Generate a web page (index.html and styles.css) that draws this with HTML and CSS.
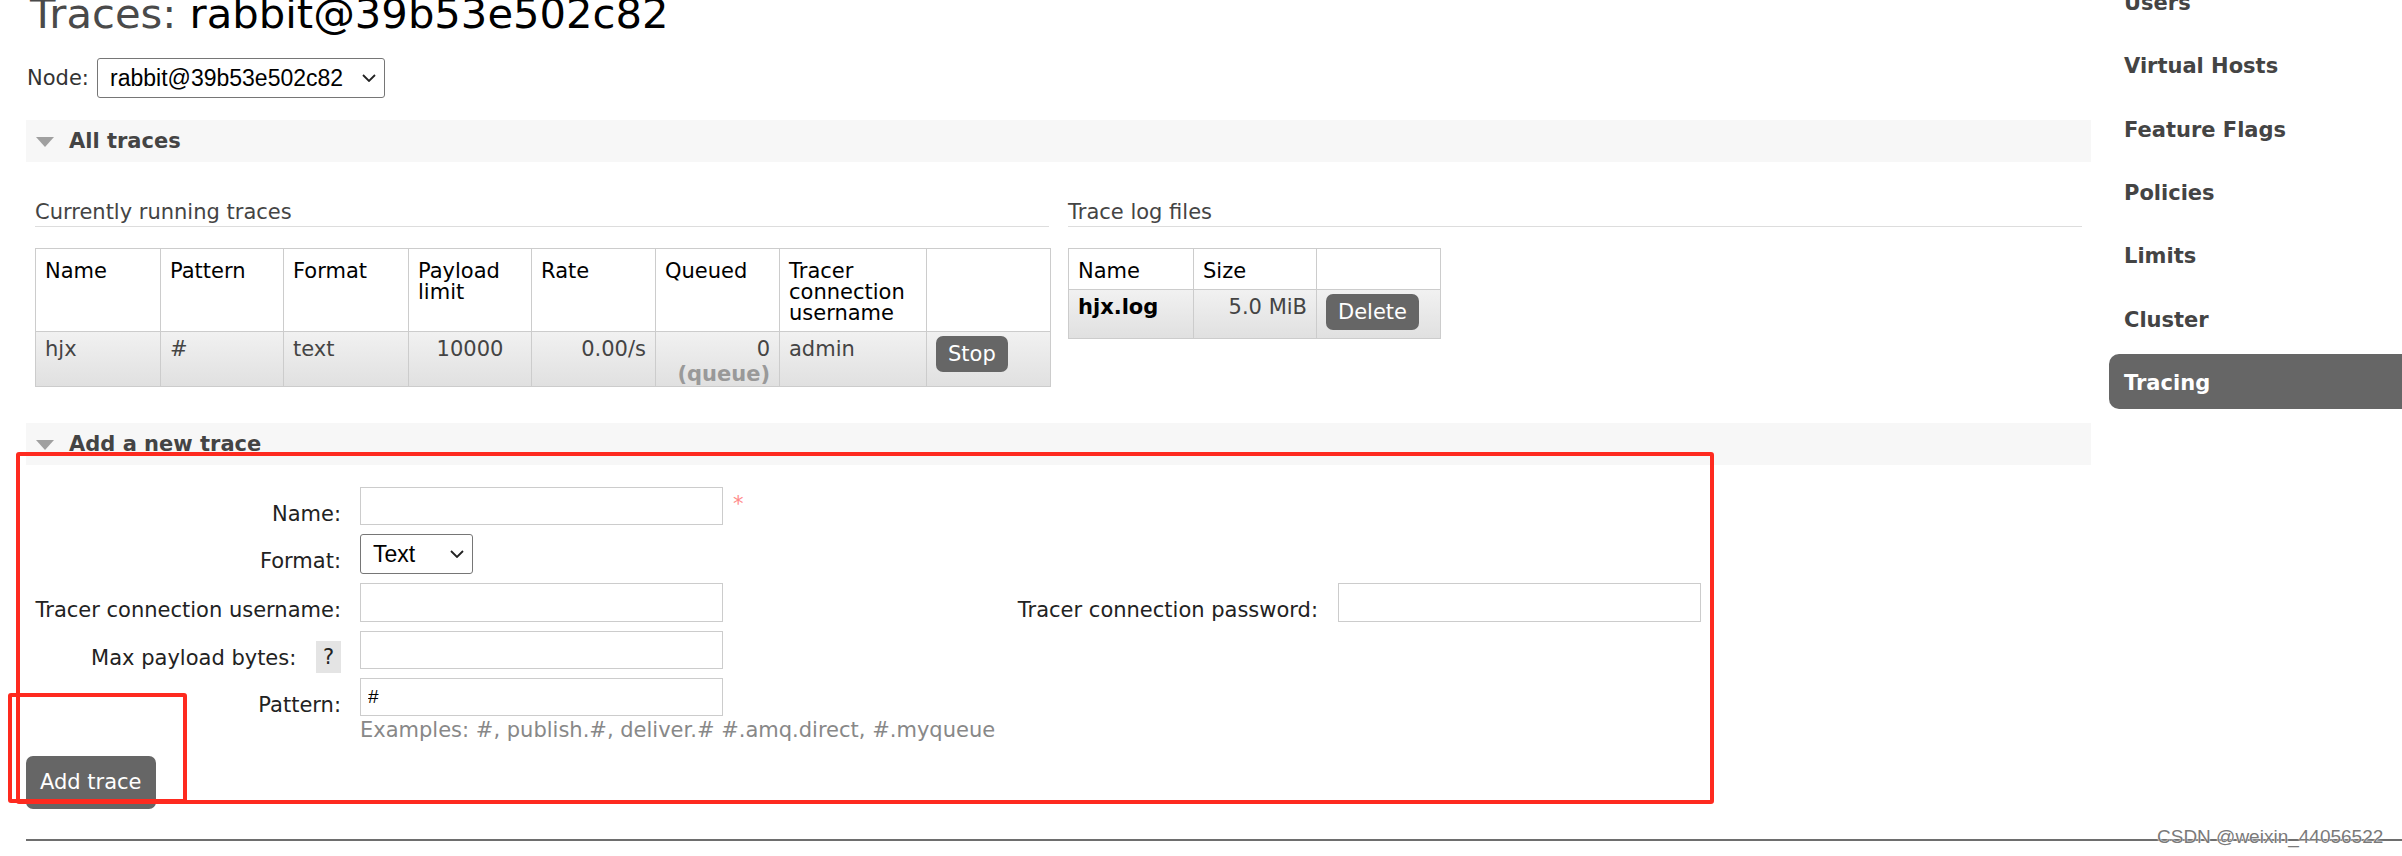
FILE: index.html
```html
<!DOCTYPE html>
<html lang="en">
<head>
<meta charset="utf-8">
<title>RabbitMQ Management: Traces</title>
<link rel="stylesheet" href="styles.css">
</head>
<body>
<div class="page">
  <main class="main">
    <h1 class="title">Traces: <span class="title-node">rabbit@39b53e502c82</span></h1>

    <div class="node-row">
      <span class="node-label">Node:</span>
      <span class="select-wrap select-node">
        <select class="select"><option>rabbit@39b53e502c82</option></select>
        <svg class="chev" viewBox="0 0 14 8" width="14" height="8"><path d="M1 1 L7 7 L13 1" fill="none" stroke="#222" stroke-width="1.8"/></svg>
      </span>
    </div>

    <section class="section">
      <div class="section-head"><span class="tri"></span><span>All traces</span></div>
      <div class="two-col">
        <div class="col">
          <h3 class="sub">Currently running traces</h3>
          <table class="list list-traces">
            <thead>
              <tr>
                <th class="w125">Name</th>
                <th class="w123">Pattern</th>
                <th class="w125">Format</th>
                <th class="w123">Payload limit</th>
                <th class="w124">Rate</th>
                <th class="w124">Queued</th>
                <th class="w147">Tracer connection username</th>
                <th class="w124"></th>
              </tr>
            </thead>
            <tbody>
              <tr>
                <td>hjx</td>
                <td>#</td>
                <td>text</td>
                <td class="c">10000</td>
                <td class="r">0.00/s</td>
                <td class="r q">0<span class="queue-sub">(queue)</span></td>
                <td>admin</td>
                <td><button class="btn btn-row" type="button">Stop</button></td>
              </tr>
            </tbody>
          </table>
        </div>
        <div class="col">
          <h3 class="sub">Trace log files</h3>
          <table class="list list-files">
            <thead>
              <tr>
                <th class="w125">Name</th>
                <th class="w123">Size</th>
                <th class="w124"></th>
              </tr>
            </thead>
            <tbody>
              <tr>
                <td class="strong">hjx.log</td>
                <td class="r">5.0 MiB</td>
                <td><button class="btn btn-row" type="button">Delete</button></td>
              </tr>
            </tbody>
          </table>
        </div>
      </div>
    </section>

    <section class="section section-add">
      <div class="section-head"><span class="tri"></span><span>Add a new trace</span></div>
      <form class="trace-form">
        <label class="f-label">Name:</label>
        <div class="f-field"><input class="input" type="text"><span class="req">*</span></div>
        <div class="f-empty"></div>
        <div class="f-empty"></div>

        <label class="f-label">Format:</label>
        <div class="f-field">
          <span class="select-wrap select-format">
            <select class="select"><option>Text</option><option>JSON</option></select>
            <svg class="chev" viewBox="0 0 14 8" width="14" height="8"><path d="M1 1 L7 7 L13 1" fill="none" stroke="#222" stroke-width="1.8"/></svg>
          </span>
        </div>
        <div class="f-empty"></div>
        <div class="f-empty"></div>

        <label class="f-label">Tracer connection username:</label>
        <div class="f-field"><input class="input input-tall" type="text"></div>
        <label class="f-label f-label-2">Tracer connection password:</label>
        <div class="f-field"><input class="input input-tall" type="password"></div>

        <label class="f-label">Max payload bytes: <span class="help">?</span></label>
        <div class="f-field"><input class="input" type="text"></div>
        <div class="f-empty"></div>
        <div class="f-empty"></div>

        <label class="f-label">Pattern:</label>
        <div class="f-field f-col">
          <input class="input" type="text" value="#">
          <span class="hint">Examples: #, publish.#, deliver.# #.amq.direct, #.myqueue</span>
        </div>
        <div class="f-empty"></div>
        <div class="f-empty"></div>
      </form>
      <button class="btn btn-add" type="button">Add trace</button>
    </section>
  </main>

  <nav class="side">
    <ul class="side-list">
      <li><a class="side-item">Users</a></li>
      <li><a class="side-item">Virtual Hosts</a></li>
      <li><a class="side-item">Feature Flags</a></li>
      <li><a class="side-item">Policies</a></li>
      <li><a class="side-item">Limits</a></li>
      <li><a class="side-item">Cluster</a></li>
      <li><a class="side-item active">Tracing</a></li>
    </ul>
  </nav>
</div>
<div class="footer"></div>

<div class="mark mark-big"></div>
<div class="mark mark-small"></div>
<div class="watermark">CSDN @weixin_44056522</div>
</body>
</html>
```
FILE: styles.css
```css
html, body {
  margin: 0;
  padding: 0;
}
body {
  position: relative;
  width: 2402px;
  height: 856px;
  overflow: hidden;
  background: #fff;
  font-family: "DejaVu Sans", Verdana, sans-serif;
  font-size: 21px;
  color: #333;
}

.page {
  display: flex;
  align-items: flex-start;
}

.main {
  width: 2065px;
  margin-left: 26px;
  flex: none;
}

/* title */
.title {
  margin: -11px 0 0 4px;
  font-size: 41.7px;
  line-height: 49px;
  font-weight: normal;
  color: #4a4a4a;
  white-space: nowrap;
}
.title-node {
  color: #000;
}

/* node selector */
.node-row {
  display: flex;
  align-items: center;
  height: 40px;
  margin-top: 20px;
}
.node-label {
  width: 71px;
  padding-left: 1px;
  box-sizing: border-box;
  color: #333;
  line-height: 21px;
}

.select-wrap {
  position: relative;
  display: inline-block;
  height: 40px;
}
.select {
  -webkit-appearance: none;
  appearance: none;
  box-sizing: border-box;
  height: 40px;
  margin: 0;
  padding: 0 30px 0 12px;
  border: 1px solid #767676;
  border-radius: 3px;
  background: #fff;
  color: #000;
  font-family: "Liberation Sans", Arial, sans-serif;
  font-size: 23px;
}
.select-node .select {
  width: 288px;
}
.select-format .select {
  width: 113px;
}
.chev {
  position: absolute;
  right: 9px;
  top: 16px;
  pointer-events: none;
}

/* sections */
.section {
  margin-top: 22px;
}
.section-add {
  margin-top: 36px;
}
.section-head {
  display: flex;
  align-items: center;
  height: 42px;
  background: #f7f7f7;
  color: #444;
  font-weight: bold;
  font-size: 21px;
}
.tri {
  width: 0;
  height: 0;
  margin: 1px 15px 0 10px;
  border-left: 9.5px solid transparent;
  border-right: 9.5px solid transparent;
  border-top: 10px solid #a0a0a0;
}

.two-col {
  display: grid;
  grid-template-columns: minmax(0, 1fr) minmax(0, 1fr);
  column-gap: 19px;
  padding: 0 9px;
  align-items: start;
}
.sub {
  margin: 38px 0 0 0;
  padding-bottom: 2px;
  border-bottom: 1px solid #ddd;
  font-size: 21px;
  line-height: 24px;
  font-weight: normal;
  color: #444;
}

/* tables */
.list {
  margin-top: 21px;
  border-collapse: collapse;
  table-layout: fixed;
  border: 1px solid #ccc;
}
.list-traces {
  width: 1015px;
}
.list-files {
  width: 372px;
}
.list th,
.list td {
  border: 1px solid #ccc;
  text-align: left;
  vertical-align: top;
  line-height: 21px;
  font-weight: normal;
}
.list th {
  padding: 12px 9px 7px;
  color: #000;
  background: #fff;
}
.list td {
  padding: 7px 9px 4px;
  color: #444;
}
.list td.q {
  padding-bottom: 1px;
}
.list tbody tr {
  background: linear-gradient(to bottom, #f1f1f1, #e0e0e0);
}
.list td.r {
  text-align: right;
}
.list td.c {
  text-align: center;
}
.list td.strong {
  color: #000;
  font-weight: bold;
}
/* content widths: target column width minus 18px padding and 1px border */
.w123 { width: 104px; }
.w124 { width: 105px; }
.w125 { width: 106px; }
.w147 { width: 128px; }

.queue-sub {
  display: block;
  margin-top: 4px;
  color: #999;
  font-weight: bold;
}

/* buttons */
.btn {
  display: block;
  box-sizing: border-box;
  border: 0;
  background: #666;
  color: #fff;
  font-family: "DejaVu Sans", Verdana, sans-serif;
  font-size: 21px;
  cursor: pointer;
}
.btn-row {
  height: 36px;
  line-height: 36px;
  padding: 0 12px;
  margin: -3px 0 4px;
  border-radius: 7px;
}
.btn-add {
  height: 53px;
  line-height: 53px;
  padding: 0 14px;
  margin-top: 15px;
  border-radius: 7px;
}

/* form */
.trace-form {
  display: grid;
  grid-template-columns: 325px 400px 578px 363px;
  row-gap: 9px;
  margin: 22px 0 0 0;
  padding: 0 9px;
}
.f-label {
  display: flex;
  justify-content: flex-end;
  align-items: flex-start;
  box-sizing: border-box;
  height: 38px;
  padding: 17px 19px 0 0;
  color: #222;
  line-height: 21px;
  white-space: pre;
}
.f-label-2 {
  padding-right: 20px;
}
.f-field {
  display: flex;
  align-items: flex-start;
}
.f-col {
  flex-direction: column;
}
.input {
  box-sizing: border-box;
  width: 363px;
  height: 38px;
  margin: 0;
  padding: 0 7px;
  border: 1px solid #ccc;
  border-radius: 0;
  background: #fff;
  color: #000;
  font-family: "Liberation Sans", Arial, sans-serif;
  font-size: 19px;
}
.input-tall {
  height: 39px;
}
.req {
  margin: 7px 0 0 10px;
  color: #ff8a8a;
  line-height: 21px;
}
.help {
  display: inline-block;
  width: 25px;
  height: 32px;
  margin: -7px 0 0 13px;
  background: #e4e4e4;
  color: #222;
  line-height: 32px;
  text-align: center;
}
.hint {
  margin-top: 4px;
  color: #888;
  line-height: 21px;
  white-space: nowrap;
}

/* sidebar */
.side {
  flex: 1;
  margin-left: 18px;
}
.side-list {
  list-style: none;
  margin: -26px 0 0 0;
  padding: 0;
  display: flex;
  flex-direction: column;
  gap: 8.33px;
}
.side-item {
  display: block;
  box-sizing: border-box;
  height: 55px;
  padding: 4px 0 0 15px;
  line-height: 51px;
  font-weight: bold;
  font-size: 21px;
  color: #444;
  white-space: nowrap;
}
.side-item.active {
  background: #666;
  color: #fff;
  border-radius: 10px 0 0 10px;
}

/* footer */
.footer {
  margin: 30px 0 0 26px;
  border-top: 2px solid #6e6e6e;
}

/* annotations drawn over the screenshot */
.mark {
  position: absolute;
  box-sizing: border-box;
  border: 4px solid #fe2a1f;
  border-radius: 3px;
}
.mark-big {
  left: 16px;
  top: 452px;
  width: 1698px;
  height: 352px;
}
.mark-small {
  left: 8px;
  top: 693px;
  width: 179px;
  height: 110px;
}
.watermark {
  position: absolute;
  left: 2157px;
  top: 826px;
  font-family: "Liberation Sans", Arial, sans-serif;
  font-size: 19px;
  line-height: 22px;
  color: #7a7a7a;
  text-shadow: 0 0 1px #fff, 0 0 2px #fff;
  white-space: nowrap;
}
```
